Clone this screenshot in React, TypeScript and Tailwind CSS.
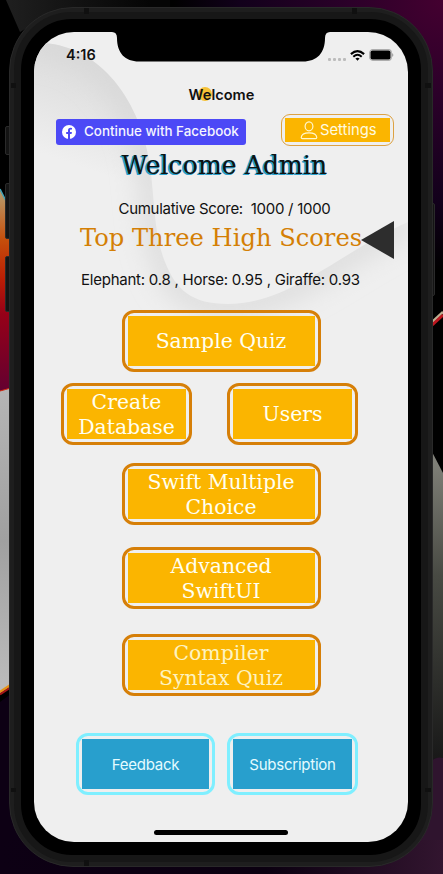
import React from "react";

const ui = "font-['Inter','Liberation_Sans',sans-serif]";
const slab = "font-['DejaVu_Serif','Liberation_Serif',serif]";

function Desktop() {
  return (
    <svg className="absolute inset-0" width="443" height="874" viewBox="0 0 443 874" aria-hidden="true">
      <defs>
        <linearGradient id="flame" x1="0" y1="190" x2="0" y2="390" gradientUnits="userSpaceOnUse">
          <stop offset="0" stopColor="#b8a070" />
          <stop offset="0.25" stopColor="#c64e0b" />
          <stop offset="0.45" stopColor="#b91d05" />
          <stop offset="0.62" stopColor="#960018" />
          <stop offset="1" stopColor="#640030" />
        </linearGradient>
        <linearGradient id="silver" x1="0" y1="390" x2="0" y2="690" gradientUnits="userSpaceOnUse">
          <stop offset="0" stopColor="#b5b5b5" />
          <stop offset="0.5" stopColor="#a0a0a0" />
          <stop offset="1" stopColor="#bcbcbc" />
        </linearGradient>
        <linearGradient id="steel" x1="0" y1="450" x2="0" y2="765" gradientUnits="userSpaceOnUse">
          <stop offset="0" stopColor="#85857d" />
          <stop offset="0.4" stopColor="#484a43" />
          <stop offset="1" stopColor="#171717" />
        </linearGradient>
        <radialGradient id="plum" cx="443" cy="0" r="270" gradientUnits="userSpaceOnUse">
          <stop offset="0" stopColor="#440030" />
          <stop offset="0.35" stopColor="#2b0029" />
          <stop offset="0.75" stopColor="#12001b" />
          <stop offset="1" stopColor="#000000" />
        </radialGradient>
        <linearGradient id="floor" x1="0" y1="0" x2="443" y2="0" gradientUnits="userSpaceOnUse">
          <stop offset="0" stopColor="#0d0014" />
          <stop offset="0.6" stopColor="#0b0010" />
          <stop offset="1" stopColor="#32152f" />
        </linearGradient>
        <linearGradient id="shade" x1="0" y1="0" x2="150" y2="0" gradientUnits="userSpaceOnUse">
          <stop offset="0" stopColor="#202020" />
          <stop offset="1" stopColor="#050505" />
        </linearGradient>
      </defs>
      <rect width="443" height="874" fill="#000" />
      <path d="M6 0H220V20H40L20 32Z" fill="url(#shade)" />
      <rect x="170" width="273" height="330" fill="url(#plum)" />
      <path d="M0 190L11 210V388L0 391Z" fill="url(#flame)" />
      <path d="M0 189L11 211" stroke="#46a5b8" strokeWidth="1.5" />
      <path d="M0 391L11 388V686L0 693Z" fill="url(#silver)" />
      <path d="M0 391L11 388" stroke="#d52a12" />
      <path d="M0 702L12 693V790L60 874H0Z" fill="#0d0014" />
      <path d="M0 692L12 684" stroke="#e59318" strokeWidth="2.5" />
      <path d="M0 694.500L12 686.500" stroke="#a51619" strokeWidth="2" />
      <path d="M430 325L443 313V450H430Z" fill="#000" />
      <path d="M430 324L443 312" stroke="#bcae91" strokeWidth="2.5" />
      <path d="M430 327L443 315" stroke="#bd1720" strokeWidth="3" />
      <path d="M430 448L443 473V770H430Z" fill="url(#steel)" />
      <path d="M430 764Q434 756 443 758V874H380Z" fill="#2f142e" />
      <rect y="840" width="443" height="34" fill="url(#floor)" />
    </svg>
  );
}

function Wave() {
  const edge = "M34 43C92 40 139 92 150 165C155 205 154 235 165 262C176 290 192 304 228 304C290 304 340 252 408 222";
  return (
    <svg className="absolute inset-0" width="374" height="810" viewBox="34 32 374 810" aria-hidden="true">
      <defs>
        <clipPath id="below">
          <path d={edge + "V500H34Z"} />
        </clipPath>
        <filter id="soft" x="-50%" y="-50%" width="200%" height="200%">
          <feGaussianBlur stdDeviation="14" />
        </filter>
        <linearGradient id="top" x1="115" y1="50" x2="75" y2="165" gradientUnits="userSpaceOnUse">
          <stop offset="0" stopColor="#dadada" />
          <stop offset="0.45" stopColor="#e2e2e2" />
          <stop offset="1" stopColor="#efefef" />
        </linearGradient>
      </defs>
      <g clipPath="url(#below)">
        <rect x="34" y="32" width="374" height="170" fill="url(#top)" />
        <path d={edge} fill="none" stroke="#d5d5d5" strokeWidth="18" filter="url(#soft)" />
      </g>
    </svg>
  );
}

type TileProps = { lines: string[]; width: string; tone?: "amber" | "blue"; faded?: boolean };

function Tile({ lines, width, tone = "amber", faded = false }: TileProps) {
  const amber = tone === "amber";
  return (
    <button
      className={`${width} h-[62px] shrink-0 rounded-[12px] border-3 p-[3px] ${amber ? "border-[#d67f08]" : "border-[#7fefff]"}`}
    >
      <span
        className={`flex h-full w-full flex-col items-center justify-center whitespace-nowrap ${
          amber
            ? `bg-[#fbb500] pt-px text-[20.400px] leading-[25px] ${slab} ${faded ? "text-[#fdf3c0]" : "text-[#fffff0]"}`
            : `bg-[#289fcd] pt-px text-[15px] leading-5 tracking-[-0.250px] text-[#e4fbff] ${ui}`
        }`}
      >
        {lines.map((line) => (
          <span key={line}>{line}</span>
        ))}
      </span>
    </button>
  );
}

function StatusBar() {
  return (
    <div className="flex h-[46px] shrink-0 items-center justify-between pr-[14px] pl-[32px]">
      <span className="text-[14.500px] font-semibold">4:16</span>
      <div className="flex items-center">
        <div className="mt-2 mr-[4px] flex gap-[2px]">
          {[0, 1, 2, 3].map((n) => (
            <i key={n} className="h-[3px] w-[3px] rounded-[1px] bg-[#bcbcbc]" />
          ))}
        </div>
        <svg width="15" height="11" viewBox="0 0 15 11" fill="none" stroke="#000" aria-hidden="true">
          <path d="M.9 4.100Q7.500-1.900 14.100 4.100" strokeWidth="2.100" />
          <path d="M3.300 6.700Q7.500 2.900 11.700 6.700" strokeWidth="2" />
          <path d="M5.400 8.500Q7.500 6.800 9.600 8.500L7.500 10.700Z" fill="#000" stroke="none" />
        </svg>
        <svg className="ml-1" width="25" height="12" viewBox="0 0 25 12" aria-hidden="true">
          <rect x=".7" y=".7" width="21.600" height="10.600" rx="3" fill="none" stroke="#adadad" strokeWidth="1.200" />
          <rect x="1.500" y="1.500" width="20" height="9" rx="2" />
          <path d="M23.200 4Q25.500 6 23.200 8Z" fill="#999" />
        </svg>
      </div>
    </div>
  );
}

export default function App() {
  return (
    <div className={`relative h-[874px] w-[443px] overflow-hidden text-[#111] ${ui}`}>
      <Desktop />
      <i className="absolute top-[126px] left-[5px] h-[29px] w-2 rounded-l-[2px] border border-[#2a2a2a] bg-[#141414]" />
      <i className="absolute top-[183px] left-[5px] h-[56px] w-2 rounded-l-[2px] border border-[#2a2a2a] bg-[#141414]" />
      <i className="absolute top-[256px] left-[5px] h-[56px] w-2 rounded-l-[2px] border border-[#2a2a2a] bg-[#141414]" />
      <i className="absolute top-[203px] left-[428px] h-[93px] w-[7px] rounded-r-[2px] border border-[#2a2a2a] bg-[#141414]" />
      <div className="relative pt-[7px] pl-[9px]">
        <div className="h-[860px] w-[424px] rounded-[64px] border border-[#292929] bg-[#1e1e1e] p-[4px]">
          <i className="absolute top-[8px] left-[84px] h-[6px] w-[5px] bg-[#101010]" />
          <i className="absolute top-[8px] left-[352px] h-[6px] w-[5px] bg-[#101010]" />
          <i className="absolute top-[860px] left-[84px] h-[6px] w-[5px] bg-[#101010]" />
          <i className="absolute top-[83px] left-[11px] h-[5px] w-[5px] bg-[#101010]" />
          <i className="absolute top-[83px] left-[425px] h-[5px] w-[6px] bg-[#101010]" />
          <i className="absolute top-[788px] left-[11px] h-[4px] w-[5px] bg-[#101010]" />
          <i className="absolute top-[788px] left-[425px] h-[4px] w-[6px] bg-[#101010]" />
          <div className="h-full w-full rounded-[58px] border-[7px] border-[#171717] bg-black px-[13px] pt-[13px]">
            <main className="relative flex h-[810px] w-[374px] flex-col overflow-hidden rounded-[40px] bg-[#efefef]">
              <Wave />
              <svg className="absolute top-0 left-[78px]" width="218" height="30" viewBox="0 0 218 30" aria-hidden="true">
                <path d="M0 0Q5 0 5 6C5 21 13 29.500 27 29.500H191C205 29.500 213 21 213 6Q213 0 218 0Z" fill="#000" />
              </svg>
              <div className="relative flex h-full flex-col">
                <StatusBar />
                <div className="flex h-[36px] items-center justify-center pb-[2px] pl-px">
                  <h1 className="relative text-[14.600px] leading-5 font-semibold">
                    <i className="absolute top-[2px] left-[9px] h-[14px] w-[14px] rounded-full bg-[#f5c137]" />
                    <span className="relative">Welcome</span>
                  </h1>
                </div>
                <div className="flex h-[32px] items-center pl-[22px]">
                  <button className="mt-[3px] flex h-[26px] w-[190px] items-center rounded-[3px] bg-[#4c49f6] pl-[6px] text-[13.400px] font-medium whitespace-nowrap text-[#f5f5ff]">
                    <svg className="mr-[8px]" width="14" height="14" viewBox="0 0 14 14" aria-hidden="true">
                      <circle cx="7" cy="7" r="7" fill="#fff" />
                      <path d="M6 14V9H4.200V7H6V5.500C6 3.700 7 2.800 8.600 2.800L10 2.900V4.600H9.100C8.300 4.600 8 5 8 5.600V7H9.900L9.600 9H8V14Z" fill="#4c49f6" />
                    </svg>
                    Continue with Facebook
                  </button>
                  <button className="ml-[35px] h-[32px] w-[113px] rounded-[9px] border border-[#dda243] p-[3px]">
                    <span className="flex h-full w-full items-center bg-[#fbb500] pl-[15px] text-[14.800px] text-[#fffbe0]">
                      <svg className="mr-[2px]" width="18" height="19" viewBox="0 0 18 19" fill="none" stroke="#fff7cf" strokeWidth="1.200" aria-hidden="true">
                        <ellipse cx="9" cy="5.300" rx="3.900" ry="4.500" />
                        <path d="M1.200 16.500C1.500 13.500 4.500 11.800 9 11.800S16.500 13.500 16.800 16.500Q16.800 17.700 15.500 17.700H2.500Q1.200 17.700 1.200 16.500Z" />
                      </svg>
                      Settings
                    </span>
                  </button>
                </div>
                <h2 className={`flex h-[38px] items-center justify-center pt-[2px] pl-[7px] text-[25.200px] whitespace-nowrap text-[#111] [text-shadow:-1px_1px_0_#289fcd,-2px_1px_0_#289fcd,-1px_0_0_#289fcd] ${slab}`}>
                  <span>Welcome Admin</span>
                </h2>
                <p className="mt-[14px] flex h-[22px] items-center justify-center pl-[7px] text-[15px] tracking-[-0.280px] whitespace-pre">Cumulative Score:  1000 / 1000</p>
                <div className="flex h-[36px] items-center pl-[46px]">
                  <h3 className={`w-[281px] shrink-0 text-[24.200px] whitespace-nowrap text-[#d47f05] ${slab}`}>Top Three High Scores</h3>
                  <svg className="mt-1 shrink-0" width="34" height="40" viewBox="0 0 34 40" aria-hidden="true">
                    <path d="M0 20L33 1V39Z" fill="#2d2d2d" />
                  </svg>
                </div>
                <p className="mt-[12px] flex h-[22px] items-center pt-[2px] pl-[47px] text-[15px] tracking-[-0.235px] whitespace-nowrap">Elephant: 0.8 , Horse: 0.95 , Giraffe: 0.93</p>
                <div className="mt-[20px] flex justify-center">
                  <Tile lines={["Sample Quiz"]} width="w-[199px]" />
                </div>
                <div className="mt-[11px] flex gap-[35px] pl-[27px]">
                  <Tile lines={["Create", "Database"]} width="w-[131px]" />
                  <Tile lines={["Users"]} width="w-[131px]" />
                </div>
                <div className="mt-[18px] flex flex-col items-center">
                  <Tile lines={["Swift Multiple", "Choice"]} width="w-[199px]" />
                  <div className="mt-[22px]"><Tile lines={["Advanced", "SwiftUI"]} width="w-[199px]" /></div>
                  <div className="mt-[25px]"><Tile lines={["Compiler", "Syntax Quiz"]} width="w-[199px]" faded /></div>
                </div>
                <div className="mt-[37px] flex gap-[12px] pl-[42px]">
                  <Tile lines={["Feedback"]} width="w-[139px]" tone="blue" />
                  <Tile lines={["Subscription"]} width="w-[131px]" tone="blue" />
                </div>
                <i className="mt-auto mb-[7px] h-[5px] w-[134px] self-center rounded-full bg-black" />
              </div>
            </main>
          </div>
        </div>
      </div>
    </div>
  );
}
